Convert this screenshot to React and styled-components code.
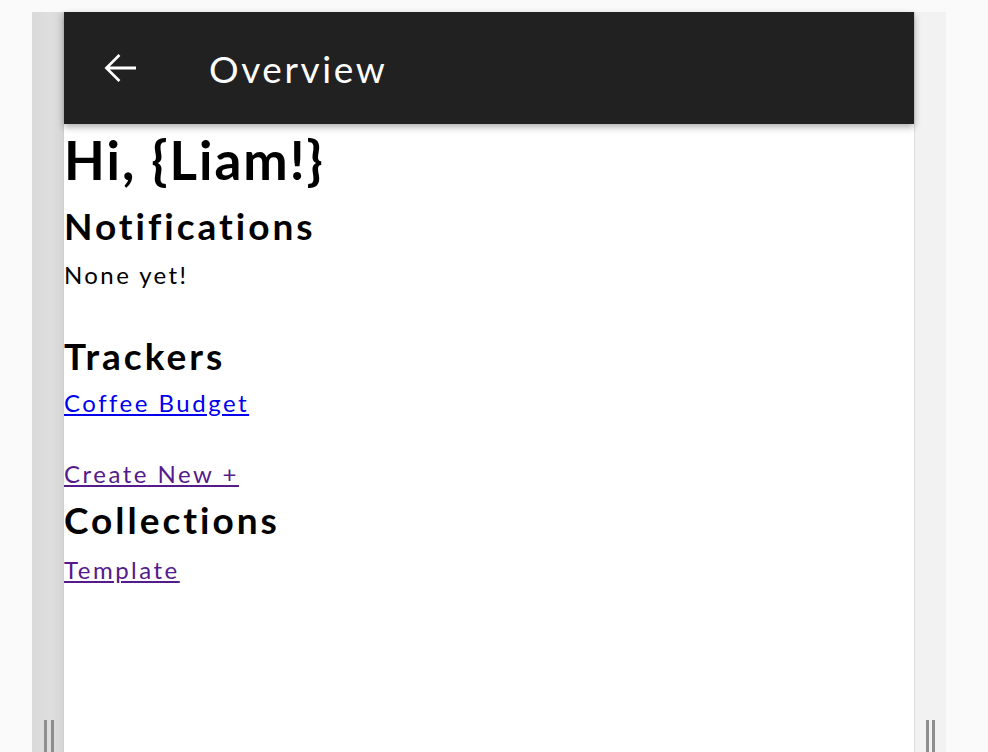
import React from 'react';
import styled, { createGlobalStyle } from 'styled-components';

const GlobalStyle = createGlobalStyle`
  html, body {
    margin: 0;
    padding: 0;
    background: #fafafa;
    font-family: Lato, 'Noto Sans', sans-serif;
  }
`;

const Page = styled.div`
  display: flex;
  height: 100vh;
  box-sizing: border-box;
  padding: 12px 0 0 32px;
  overflow: hidden;
`;

const Rail = styled.div`
  width: 31px;
  flex-shrink: 0;
  display: flex;
  flex-direction: column;
  justify-content: flex-end;
  background: ${props => props.$side === 'left'
    ? 'linear-gradient(90deg, #dadada, #dedede 60%, #d6d6d6)'
    : '#f2f2f2'};
`;

const Grip = styled.div`
  display: flex;
  gap: ${props => props.$gap}px;
  height: 32px;
  padding-left: ${props => props.$offset}px;
`;

const GripBar = styled.span`
  width: 3px;
  height: 100%;
  background: #8e8e8e;
`;

const Panel = styled.div`
  width: 850px;
  flex-shrink: 0;
  background: #ffffff;
  border-left: 1px solid #cfcfcf;
  border-right: 1px solid #dcdcdc;
  display: flex;
  flex-direction: column;
`;

const Header = styled.header`
  height: 112px;
  flex-shrink: 0;
  background: #212121;
  display: flex;
  align-items: center;
  padding-left: 32px;
  box-shadow: 0 3px 7px rgba(0, 0, 0, 0.32);
  position: relative;
  z-index: 1;
`;

const BackButton = styled.button`
  width: 48px;
  height: 48px;
  padding: 0;
  border: none;
  background: transparent;
  color: #ffffff;
  display: flex;
  align-items: center;
  justify-content: center;
  cursor: pointer;
`;

const Title = styled.h1`
  margin: 0 0 0 65px;
  color: #ffffff;
  font-size: 37px;
  font-weight: 400;
  letter-spacing: 2.6px;
`;

const Content = styled.main`
  display: flex;
  flex-direction: column;
  align-items: flex-start;
`;

const Greeting = styled.h2`
  margin: 6px 0 0;
  font-size: 53px;
  line-height: 60px;
  font-weight: 700;
  letter-spacing: 2px;
  color: #000;
`;

const SectionTitle = styled.h3`
  margin: ${props => props.$top}px 0 0;
  font-size: 37px;
  line-height: 44px;
  font-weight: 700;
  letter-spacing: 3px;
  color: #000;
`;

const Text = styled.p`
  margin: 12px 0 0;
  font-size: 24px;
  line-height: 29px;
  letter-spacing: 2.4px;
  color: #000;
`;

const Link = styled.a`
  display: block;
  margin-top: ${props => props.$top}px;
  font-size: 24px;
  line-height: 29px;
  letter-spacing: 2.5px;
  color: ${props => props.$visited ? '#551a8b' : '#0000ee'};
  text-decoration: underline;
`;

const ArrowBack = () => (
  <svg width="48" height="48" viewBox="0 0 24 24" fill="currentColor">
    <path d="M20 11.25H6.9l5.3-5.3L11.25 5 4.25 12l7 7 .95-.95-5.3-5.3H20z" />
  </svg>
);

const App = () => (
  <>
    <GlobalStyle />
    <Page>
      <Rail $side="left">
        <Grip $offset={12} $gap={4}>
          <GripBar />
          <GripBar />
        </Grip>
      </Rail>
      <Panel>
        <Header>
          <BackButton aria-label="Back">
            <ArrowBack />
          </BackButton>
          <Title>Overview</Title>
        </Header>
        <Content>
          <Greeting>Hi, {'{Liam!}'}</Greeting>
          <SectionTitle $top={14}>Notifications</SectionTitle>
          <Text>None yet!</Text>
          <SectionTitle $top={45}>Trackers</SectionTitle>
          <Link href="#coffee" $top={10}>Coffee Budget</Link>
          <Link href="#new" $top={42} $visited>Create New +</Link>
          <SectionTitle $top={10}>Collections</SectionTitle>
          <Link href="#template" $top={13} $visited>Template</Link>
        </Content>
      </Panel>
      <Rail $side="right">
        <Grip $offset={11} $gap={3}>
          <GripBar />
          <GripBar />
        </Grip>
      </Rail>
    </Page>
  </>
);

export default App;
